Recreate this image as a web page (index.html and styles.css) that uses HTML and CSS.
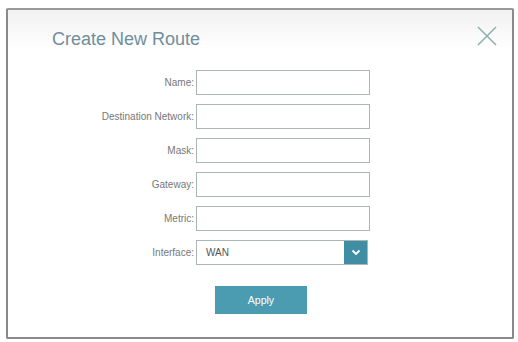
FILE: index.html
```html
<!DOCTYPE html>
<html>
<head>
  <title>Create New Route</title>
  <link rel="stylesheet" href="styles.css">
</head>
<body>
  <div id="dialog">
    <div id="header">
      <h1 id="title">Create New Route</h1>
      <div id="close">
        <svg width="22" height="22" viewBox="0 0 22 22">
          <path d="M2 2 L20 20 M20 2 L2 20" stroke="#8fb3ab" stroke-width="1.6" fill="none"/>
        </svg>
      </div>
    </div>
    <div id="form">
      <div class="row"><label class="lbl">Name:</label><div class="field"></div></div>
      <div class="row"><label class="lbl">Destination Network:</label><div class="field"></div></div>
      <div class="row"><label class="lbl">Mask:</label><div class="field"></div></div>
      <div class="row"><label class="lbl">Gateway:</label><div class="field"></div></div>
      <div class="row"><label class="lbl">Metric:</label><div class="field"></div></div>
      <div class="row">
        <label class="lbl">Interface:</label>
        <div class="field select">
          <span class="value">WAN</span>
          <span class="arrow">
            <svg width="10" height="7" viewBox="0 0 10 7">
              <path d="M1.5 1.5 L5 5 L8.5 1.5" stroke="#fff" stroke-width="1.8" fill="none"/>
            </svg>
          </span>
        </div>
      </div>
    </div>
    <div id="actions">
      <div id="apply">Apply</div>
    </div>
  </div>
</body>
</html>
```

FILE: styles.css
```css
html, body {
  margin: 0;
  padding: 0;
  background: #fff;
  width: 518px;
  height: 342px;
  overflow: hidden;
  font-family: "Liberation Sans", Arial, sans-serif;
}

#dialog {
  box-sizing: border-box;
  margin: 8px 0 0 6px;
  width: 508px;
  height: 331px;
  border: 2px solid #8a8a8a;
  border-top-color: #9a9a9a;
  border-radius: 2px;
  background: linear-gradient(#f1f1f1, #fff 40px);
  display: flex;
  flex-direction: column;
}

#header {
  box-sizing: border-box;
  display: flex;
  justify-content: space-between;
  align-items: flex-start;
  padding: 15px 14px 0 44px;
  height: 46px;
}

#title {
  margin: 4px 0 0 0;
  font-size: 18px;
  font-weight: normal;
  color: #6f8e9c;
}

#close {
  width: 22px;
  height: 22px;
}

#form {
  display: flex;
  flex-direction: column;
  gap: 9px;
  margin-top: 14px;
}

.row {
  display: flex;
  align-items: center;
  height: 25px;
}

.lbl {
  width: 186px;
  text-align: right;
  font-size: 10px;
  color: #777;
  padding-right: 2px;
}

.field {
  box-sizing: border-box;
  width: 174px;
  height: 25px;
  border: 1px solid #a9b6b3;
  background: #fff;
}

.select {
  display: flex;
  align-items: center;
  justify-content: space-between;
  width: 172px;
}

.value {
  font-size: 10px;
  color: #555;
  padding-left: 9px;
}

.arrow {
  width: 23px;
  height: 23px;
  background: #3f8ea4;
  display: flex;
  align-items: center;
  justify-content: center;
}

#actions {
  display: flex;
  justify-content: center;
  margin-top: 21px;
  padding-left: 2px;
}

#apply {
  width: 92px;
  height: 28px;
  background: #4b9cb1;
  color: #fff;
  font-size: 10.5px;
  display: flex;
  align-items: center;
  justify-content: center;
}
```
